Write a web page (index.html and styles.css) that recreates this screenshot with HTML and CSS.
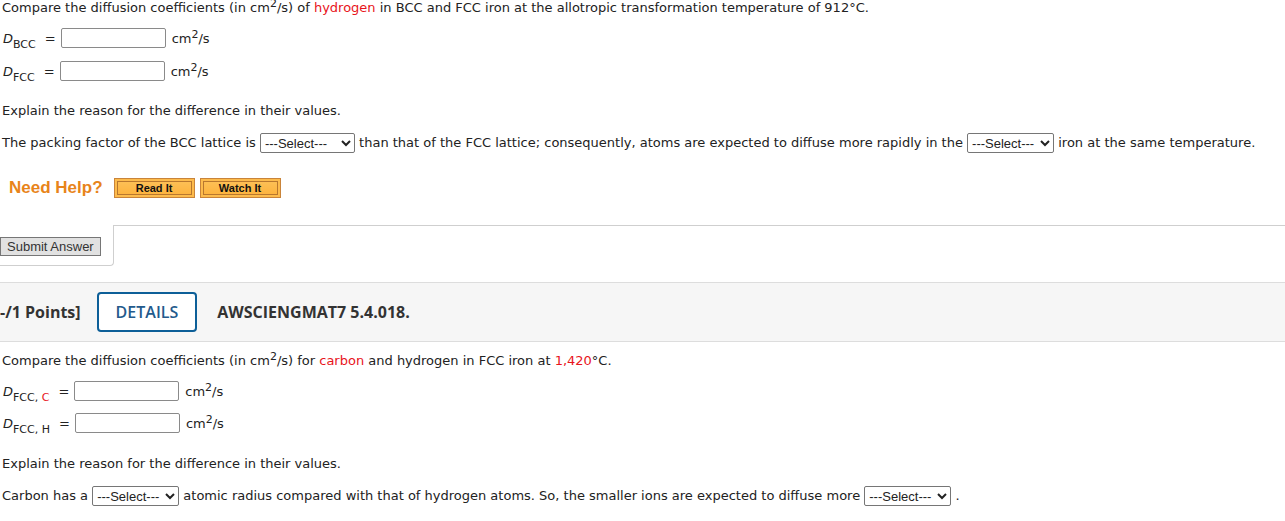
FILE: index.html
```html
<!DOCTYPE html>
<html lang="en">
<head>
    <meta charset="UTF-8">
    <title>AWSCIENGMAT7 5.4</title>
    <link rel="stylesheet" href="styles.css">
</head>
<body>

<div class="question">
    <p class="line first">Compare the diffusion coefficients (in cm<sup>2</sup>/s) of <span class="red">hydrogen</span> in BCC and FCC iron at the allotropic transformation temperature of 912&deg;C.</p>

    <div class="eq-row row-bcc">
        <span class="sym"><i>D</i><sub>BCC</sub></span><span class="eq">=</span>
        <input type="text" class="answer">
        <span class="unit">cm<sup>2</sup>/s</span>
    </div>
    <div class="eq-row row-fcc">
        <span class="sym"><i>D</i><sub>FCC</sub></span><span class="eq">=</span>
        <input type="text" class="answer">
        <span class="unit">cm<sup>2</sup>/s</span>
    </div>

    <p class="line explain">Explain the reason for the difference in their values.</p>

    <div class="sel-row packing">
        The packing factor of the BCC lattice is
        <select class="pick wide"><option>---Select---</option><option>greater</option><option>smaller</option></select>
        than that of the FCC lattice; consequently, atoms are expected to diffuse more rapidly in the
        <select class="pick"><option>---Select---</option><option>BCC</option><option>FCC</option></select>
        iron at the same temperature.
    </div>

    <div class="help">
        <span class="help-title">Need Help?</span>
        <button class="help-btn">Read It</button>
        <button class="help-btn">Watch It</button>
    </div>
</div>

<div class="submit-bar">
    <div class="submit-tab"><button class="submit">Submit Answer</button></div>
    <div class="submit-rest"></div>
</div>

<div class="q-header">
    <span class="points">-/1 Points]</span>
    <span class="details">DETAILS</span>
    <span class="q-id">AWSCIENGMAT7 5.4.018.</span>
</div>

<div class="question">
    <p class="line second">Compare the diffusion coefficients (in cm<sup>2</sup>/s) for <span class="red">carbon</span> and hydrogen in FCC iron at <span class="red">1,420</span>&deg;C.</p>

    <div class="eq-row row-c">
        <span class="sym"><i>D</i><sub>FCC, <span class="red">C</span></sub></span><span class="eq">=</span>
        <input type="text" class="answer">
        <span class="unit">cm<sup>2</sup>/s</span>
    </div>
    <div class="eq-row row-h">
        <span class="sym"><i>D</i><sub>FCC, H</sub></span><span class="eq">=</span>
        <input type="text" class="answer">
        <span class="unit">cm<sup>2</sup>/s</span>
    </div>

    <p class="line explain2">Explain the reason for the difference in their values.</p>

    <div class="sel-row carbon">
        Carbon has a
        <select class="pick"><option>---Select---</option><option>larger</option><option>smaller</option></select>
        atomic radius compared with that of hydrogen atoms. So, the smaller ions are expected to diffuse more
        <select class="pick"><option>---Select---</option><option>rapidly</option><option>slowly</option></select>
        .
    </div>
</div>

</body>
</html>
```

FILE: styles.css
```css
body { margin: 0; font-family: "DejaVu Sans", Verdana, sans-serif; font-size: 13px; color: #222; background: #fff; }
.question { padding-left: 2px; }
.line { margin: 0; height: 16px; line-height: 16px; white-space: nowrap; }
.red { color: #e8141b; }
sup { font-size: 11px; line-height: 0; vertical-align: 5px; }
sub { font-size: 11px; line-height: 0; vertical-align: -5px; }

.eq-row { display: flex; align-items: center; height: 20px; white-space: nowrap; }
.sym { padding-left: 1px; }
.eq { margin: 0 5px 0 9px; }
.answer {
    width: 105px;
    height: 20px;
    box-sizing: border-box;
    margin: 0 6px 0 0;
    padding: 0 3px;
    border: 1px solid #8a8a8a;
    border-radius: 2px;
    font: 13px "DejaVu Sans", sans-serif;
}
.unit { white-space: nowrap; }

.row-bcc { margin-top: 12px; }
.row-fcc { margin-top: 13px; }
.explain { margin-top: 22px; }
.sel-row { margin-top: 14px; height: 20px; line-height: 20px; white-space: nowrap; }
.pick {
    height: 20px;
    width: 87px;
    padding: 0;
    font: 13px "Liberation Sans", Arial, sans-serif;
    color: #222;
    border: 1px solid #767676;
    border-radius: 2px;
    background: #fff;
    vertical-align: top;
}
.pick.wide { width: 95px; }

.help { margin-top: 25px; height: 20px; display: flex; align-items: center; padding-left: 7px; }
.help-title { font: bold 17px "Liberation Sans", Arial, sans-serif; color: #e8841a; margin-right: 11px; }
.help-btn {
    width: 81px;
    height: 20px;
    margin-right: 5px;
    padding: 0;
    font: bold 11px "Liberation Sans", Arial, sans-serif;
    color: #111;
    background: linear-gradient(#fdc25a, #fdb13a);
    border: 1px solid #c9843a;
    box-shadow: inset 0 0 0 2px #fdbb4c, inset 0 0 0 3px #b8772e;
}

.submit-bar { display: flex; margin-top: 27px; height: 41px; }
.submit-tab {
    width: 114px;
    box-sizing: border-box;
    padding-top: 12px;
    border-right: 1px solid #cfcfcf;
    border-bottom: 1px solid #cfcfcf;
    border-bottom-right-radius: 4px;
}
.submit-rest { flex: 1; border-top: 1px solid #cfcfcf; }
.submit {
    height: 19px;
    padding: 0 6px;
    margin: 0;
    font: 13px "Liberation Sans", Arial, sans-serif;
    color: #333;
    background: #e1e1e1;
    border: 1px solid #767676;
}

.q-header {
    margin-top: 16px;
    height: 58px;
    display: flex;
    align-items: center;
    background: #f6f6f6;
    border-top: 1px solid #dddddd;
    border-bottom: 1px solid #dddddd;
    font-family: "Open Sans", sans-serif;
    font-size: 16px;
    color: #333;
}
.points { font-weight: bold; margin-right: 16px; }
.details {
    height: 40px;
    box-sizing: border-box;
    padding: 0 17px;
    display: flex;
    align-items: center;
    border: 2px solid #0d5f98;
    border-radius: 4px;
    color: #235a8c;
    font-weight: 600;
    background: #fff;
    margin-right: 20px;
}
.q-id { font-weight: bold; }

.second { margin-top: 11px; }
.row-c { margin-top: 12px; }
.row-h { margin-top: 12px; }
.explain2 { margin-top: 23px; }
```
